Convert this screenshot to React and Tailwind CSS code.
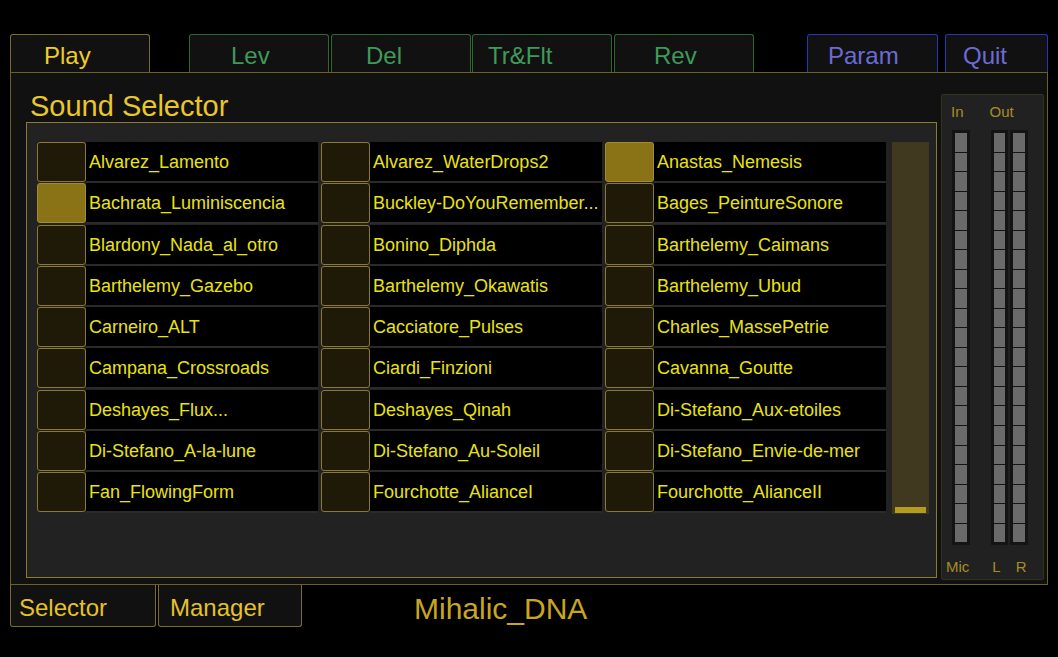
import React from 'react'

const sounds = [
  ['Alvarez_Lamento', 'Alvarez_WaterDrops2', 'Anastas_Nemesis'],
  ['Bachrata_Luminiscencia', 'Buckley-DoYouRemember...', 'Bages_PeintureSonore'],
  ['Blardony_Nada_al_otro', 'Bonino_Diphda', 'Barthelemy_Caimans'],
  ['Barthelemy_Gazebo', 'Barthelemy_Okawatis', 'Barthelemy_Ubud'],
  ['Carneiro_ALT', 'Cacciatore_Pulses', 'Charles_MassePetrie'],
  ['Campana_Crossroads', 'Ciardi_Finzioni', 'Cavanna_Goutte'],
  ['Deshayes_Flux...', 'Deshayes_Qinah', 'Di-Stefano_Aux-etoiles'],
  ['Di-Stefano_A-la-lune', 'Di-Stefano_Au-Soleil', 'Di-Stefano_Envie-de-mer'],
  ['Fan_FlowingForm', 'Fourchotte_AlianceI', 'Fourchotte_AlianceII'],
]

// row/col of the lit pads
const selected = { '0-2': true, '1-0': true }

function Tab({ label, className, textClass }) {
  return (
    <div className={`h-[38px] shrink-0 rounded-t-[3px] border border-b-0 bg-[#111111] pt-[9px] text-[24px] leading-none ${className}`}>
      <span className={textClass}>{label}</span>
    </div>
  )
}

function Pad({ on }) {
  return (
    <div
      className={`h-[40px] w-[49px] shrink-0 rounded-[3px] border ${
        on ? 'border-[#a48d2c] bg-[#8a7317]' : 'border-[#8a7934] bg-[#1f1907]'
      }`}
    />
  )
}

function Meter({ className }) {
  return (
    <div className={`flex h-[415px] flex-col gap-[1px] bg-[#141414] p-[3px] ${className}`}>
      {Array.from({ length: 21 }).map((_, i) => (
        <div key={i} className="flex-1 bg-[#6a6a6a]" />
      ))}
    </div>
  )
}

export default function App() {
  return (
    <div
      className="h-[657px] w-[1058px] overflow-hidden bg-black pl-[10px] pt-[34px]"
      style={{ fontFamily: '"Liberation Sans", Arial, sans-serif' }}
    >
      {/* top tabs */}
      <div className="flex h-[38px]">
        <Tab label="Play" className="w-[140px] border-[#7c6c2c] pl-[33px]" textClass="text-[#efcb2b]" />
        <Tab label="Lev" className="ml-[39px] w-[140px] border-[#2b6a2b] pl-[41px]" textClass="text-[#3f9a5a]" />
        <Tab label="Del" className="ml-[2px] w-[140px] border-[#2b6a2b] pl-[34px]" textClass="text-[#3f9a5a]" />
        <Tab label="Tr&Flt" className="ml-[1px] w-[140px] border-[#2b6a2b] pl-[15px]" textClass="text-[#3f9a5a]" />
        <Tab label="Rev" className="ml-[2px] w-[140px] border-[#2b6a2b] pl-[39px]" textClass="text-[#3f9a5a]" />
        <Tab label="Param" className="ml-[53px] w-[131px] border-[#2437b4] pl-[20px]" textClass="text-[#6b6bd6]" />
        <Tab label="Quit" className="ml-[7px] w-[103px] border-[#2437b4] pl-[17px]" textClass="text-[#6b6bd6]" />
      </div>

      {/* main panel */}
      <div className="flex h-[513px] w-[1038px] items-start border border-[#6e6020] bg-[#111111]">
        <div className="flex flex-col pl-[15px] pt-[19px]">
          <div className="h-[29px] pl-[4px] text-[29px] leading-none text-[#e9c62b]">Sound Selector</div>
          <div className="mt-[1px] flex h-[456px] w-[911px] items-start border border-[#8b7a32] bg-[#222222] pl-[10px] pt-[19px]">
            <div className="flex flex-col">
              {sounds.map((row, r) => (
                <div key={r} className="flex h-[41.25px]">
                  {row.map((name, c) => (
                    <div key={c} className="flex w-[284px] items-start">
                      <Pad on={selected[`${r}-${c}`]} />
                      <div className="flex h-[41px] w-[232px] items-center border-b-2 border-[#2a2a2a] bg-black pl-[3px] pt-[2px] text-[18px] text-[#e9e30f]">
                        {name}
                      </div>
                    </div>
                  ))}
                </div>
              ))}
            </div>
            <div className="ml-[3px] flex h-[372px] w-[37px] flex-col justify-end bg-[#41391f] px-[3px] pb-[1px]">
              <div className="h-[6px] bg-[#b39c1f]" />
            </div>
          </div>
        </div>

        {/* level meters */}
        <div className="ml-[4px] mt-[21px] flex h-[486px] w-[103px] flex-col rounded-[2px] border border-[#34321f] bg-[#212121] text-[15px] leading-none text-[#a78d27]">
          <div className="mt-[9px] flex h-[15px]">
            <span className="ml-[9px]">In</span>
            <span className="ml-[26px]">Out</span>
          </div>
          <div className="mt-[11px] flex">
            <Meter className="ml-[10px] w-[18px]" />
            <Meter className="ml-[21px] w-[17px]" />
            <Meter className="ml-[2px] w-[18px]" />
          </div>
          <div className="mt-[14px] flex h-[15px]">
            <span className="ml-[4px]">Mic</span>
            <span className="ml-[23px]">L</span>
            <span className="ml-[15px]">R</span>
          </div>
        </div>
      </div>

      {/* bottom tabs */}
      <div className="flex h-[42px] items-start">
        <div className="h-[42px] w-[146px] rounded-b-[3px] border border-t-0 border-[#7c6c2c] bg-[#111111] pl-[8px] pt-[11px] text-[24px] leading-none text-[#e4c22a]">
          Selector
        </div>
        <div className="ml-[2px] h-[42px] w-[144px] rounded-b-[3px] border border-t-0 border-[#7c6c2c] bg-[#111111] pl-[11px] pt-[11px] text-[24px] leading-none text-[#e4c22a]">
          Manager
        </div>
        <div className="ml-[112px] pt-[9px] text-[30px] leading-none text-[#c9a71d]">Mihalic_DNA</div>
      </div>
    </div>
  )
}
